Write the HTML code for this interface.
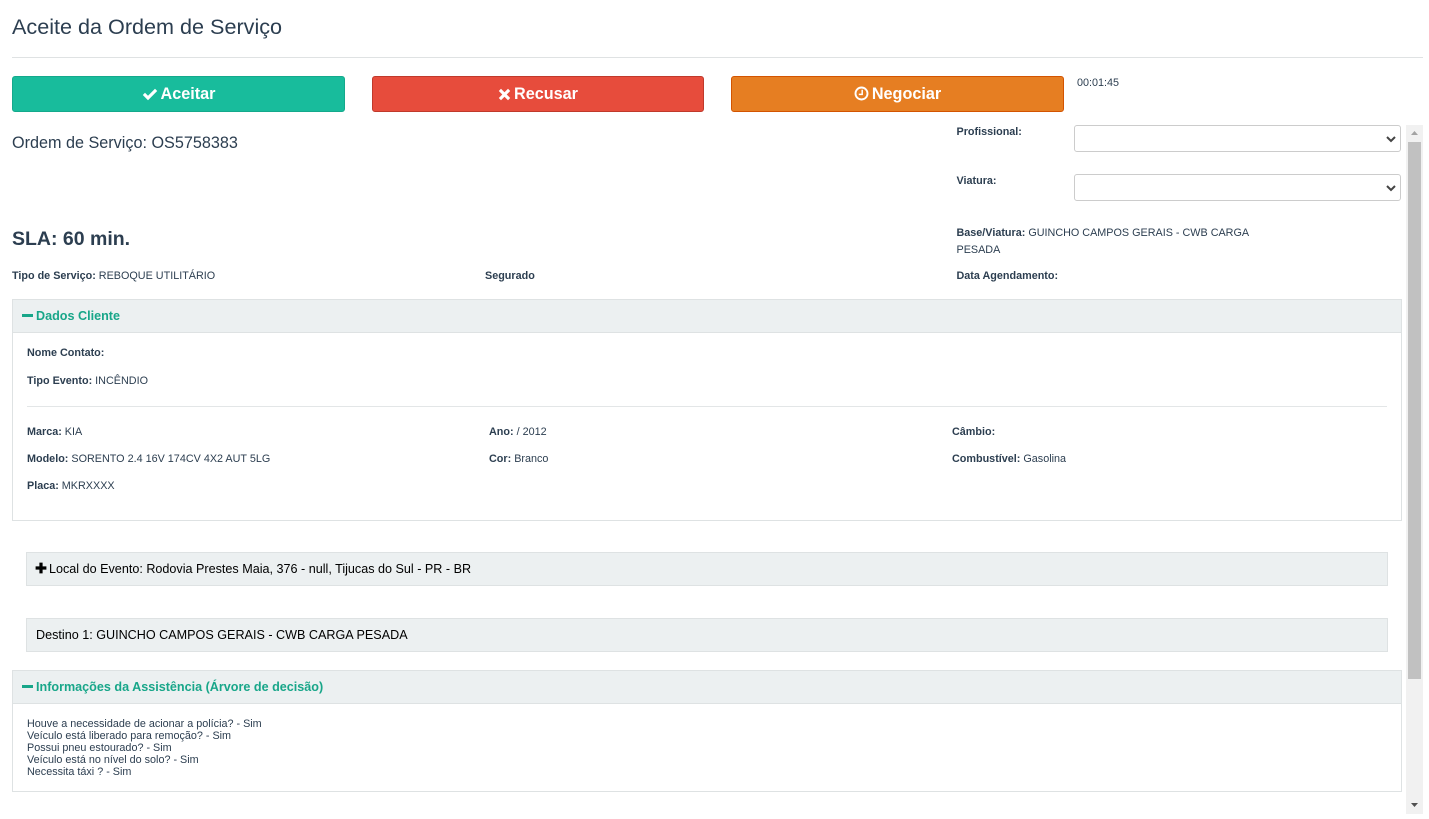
<!DOCTYPE html>
<html lang="pt">
<head>
<meta charset="utf-8">
<title>Aceite da Ordem de Serviço</title>
<style>
html,body{margin:0;padding:0;background:#fff;width:1429px;height:819px;overflow:hidden}
body{position:relative;font-family:"Liberation Sans",Arial,sans-serif;color:#2c3e50;font-size:10.8px}
.a{position:absolute;white-space:nowrap;line-height:14px}
.b{position:absolute;box-sizing:border-box}
b{font-weight:700}
.btn{position:absolute;box-sizing:border-box;top:76px;height:36px;border-radius:3px;color:#fff;font-weight:700;font-size:16.2px;line-height:35px;text-align:center;border:1px solid}
.btn svg{display:inline-block;vertical-align:-2px;margin-right:3px}
.sel{position:absolute;box-sizing:border-box;left:1074px;width:327px;height:27px;border:1px solid #ccc;border-radius:3px;background:#fff}
.sel svg{position:absolute;right:3px;top:9px}
.head{position:absolute;box-sizing:border-box;background:#ecf0f1;border:1px solid #dee2e3}
.panel{position:absolute;box-sizing:border-box;border:1px solid #dee2e3;background:#fff}
.green{color:#18a689;font-size:12.6px;font-weight:700}
</style>
</head>
<body>
<div class="a" style="left:12px;top:14px;font-size:21.6px;line-height:26px">Aceite da Ordem de Serviço</div>
<div class="b" style="left:12px;top:57px;width:1411px;height:1px;background:#dfe2e3"></div>

<div class="btn" style="left:12px;width:333px;background:#18bc9c;border-color:#14a98c">
<svg width="16" height="13" viewBox="0 0 16 13"><path d="M.8 7 3 4.8 6 7.8 13 .8 15.2 3 6 12.2Z" fill="#fff"/></svg>Aceitar</div>
<div class="btn" style="left:372px;width:332px;background:#e74c3c;border-color:#c0392b">
<svg width="13" height="13" viewBox="0 0 13 13"><path d="M3 .8 6.5 4.3 10 .8 12.2 3 8.7 6.5 12.2 10 10 12.2 6.5 8.7 3 12.2.8 10 4.3 6.5.8 3Z" fill="#fff"/></svg>Recusar</div>
<div class="btn" style="left:731px;width:333px;background:#e67e22;border-color:#d35400">
<svg width="15" height="15" viewBox="0 0 15 15"><circle cx="7.5" cy="7.5" r="6" fill="none" stroke="#fff" stroke-width="1.9"/><path d="M8.2 3.8V8.4H4.8" fill="none" stroke="#fff" stroke-width="1.5"/></svg>Negociar</div>
<div class="a" style="left:1077px;top:76px">00:01:45</div>

<div class="a" style="left:12px;top:133px;font-size:16.2px;line-height:20px">Ordem de Serviço: OS5758383</div>
<div class="a" style="left:956.5px;top:125px"><b>Profissional:</b></div>
<div class="sel" style="top:125px"><svg width="12" height="9" viewBox="0 0 12 9"><path d="M2 2 6 6 10 2" fill="none" stroke="#444" stroke-width="2"/></svg></div>
<div class="a" style="left:956.5px;top:174px"><b>Viatura:</b></div>
<div class="sel" style="top:174px"><svg width="12" height="9" viewBox="0 0 12 9"><path d="M2 2 6 6 10 2" fill="none" stroke="#444" stroke-width="2"/></svg></div>

<div class="a" style="left:12px;top:228px;font-size:19.5px;line-height:22px;font-weight:700">SLA: 60 min.</div>
<div class="a" style="left:956.5px;top:226px"><b>Base/Viatura:</b> GUINCHO CAMPOS GERAIS - CWB CARGA</div>
<div class="a" style="left:956.5px;top:243px">PESADA</div>
<div class="a" style="left:12px;top:269px"><b>Tipo de Serviço:</b> REBOQUE UTILITÁRIO</div>
<div class="a" style="left:485px;top:269px"><b>Segurado</b></div>
<div class="a" style="left:956.5px;top:269px"><b>Data Agendamento:</b></div>

<div class="panel" style="left:12px;top:299px;width:1390px;height:222px"></div>
<div class="head" style="left:12px;top:299px;width:1390px;height:34px"></div>
<div class="b" style="left:22px;top:314px;width:11px;height:3px;background:#18a689"></div>
<div class="a green" style="left:36px;top:309px">Dados Cliente</div>
<div class="a" style="left:27px;top:346px"><b>Nome Contato:</b></div>
<div class="a" style="left:27px;top:374px"><b>Tipo Evento:</b> INCÊNDIO</div>
<div class="b" style="left:27px;top:406px;width:1360px;height:1px;background:#e3e6e7"></div>
<div class="a" style="left:27px;top:425px"><b>Marca:</b> KIA</div>
<div class="a" style="left:489px;top:425px"><b>Ano:</b> / 2012</div>
<div class="a" style="left:952px;top:425px"><b>Câmbio:</b></div>
<div class="a" style="left:27px;top:452px"><b>Modelo:</b> SORENTO 2.4 16V 174CV 4X2 AUT 5LG</div>
<div class="a" style="left:489px;top:452px"><b>Cor:</b> Branco</div>
<div class="a" style="left:952px;top:452px"><b>Combustível:</b> Gasolina</div>
<div class="a" style="left:27px;top:479px"><b>Placa:</b> MKRXXXX</div>

<div class="head" style="left:26px;top:552px;width:1362px;height:34px"></div>
<svg class="b" style="left:35px;top:562px" width="12" height="12" viewBox="0 0 12 12"><path d="M4.4.6H7.6V4.4H11.4V7.6H7.6V11.4H4.4V7.6H.6V4.4H4.4Z" fill="#000"/></svg>
<div class="a" style="left:49px;top:562px;font-size:12.6px;color:#000">Local do Evento: Rodovia Prestes Maia, 376 - null, Tijucas do Sul - PR - BR</div>

<div class="head" style="left:26px;top:618px;width:1362px;height:34px"></div>
<div class="a" style="left:36px;top:628px;font-size:12.6px;color:#000">Destino 1: GUINCHO CAMPOS GERAIS - CWB CARGA PESADA</div>

<div class="panel" style="left:12px;top:670px;width:1390px;height:122px"></div>
<div class="head" style="left:12px;top:670px;width:1390px;height:34px"></div>
<div class="b" style="left:22px;top:685px;width:11px;height:3px;background:#18a689"></div>
<div class="a green" style="left:36px;top:680px">Informações da Assistência (Árvore de decisão)</div>
<div class="a" style="left:27px;top:718px;line-height:12px">Houve a necessidade de acionar a polícia? - Sim<br>Veículo está liberado para remoção? - Sim<br>Possui pneu estourado? - Sim<br>Veículo está no nível do solo? - Sim<br>Necessita táxi ? - Sim</div>

<div class="b" style="left:1406px;top:125px;width:17px;height:689px;background:#f1f1f1"></div>
<div class="b" style="left:1408px;top:142px;width:13px;height:537px;background:#c1c1c1"></div>
<svg class="b" style="left:1410px;top:130px" width="9" height="6" viewBox="0 0 9 6"><path d="M4.5 1 8 5H1Z" fill="#a3a3a3"/></svg>
<svg class="b" style="left:1410px;top:802px" width="9" height="6" viewBox="0 0 9 6"><path d="M1 1H8L4.5 5Z" fill="#505050"/></svg>
</body>
</html>
